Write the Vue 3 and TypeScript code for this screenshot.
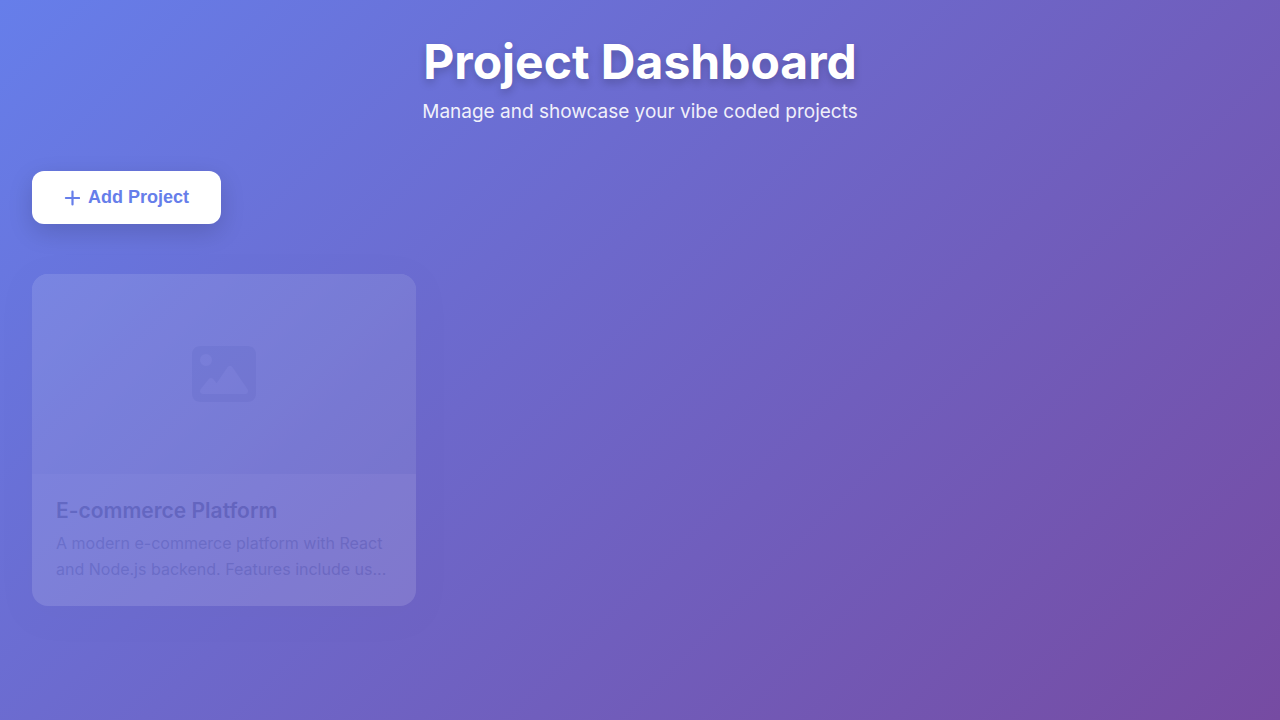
<script setup lang="ts">
interface Project {
  id: number
  title: string
  description: string
}

const projects: Project[] = [
  {
    id: 1,
    title: 'E-commerce Platform',
    description: 'A modern e-commerce platform with React and Node.js backend. Features include us...',
  },
]
</script>

<template>
  <div class="page">
    <header class="header">
      <h1>Project Dashboard</h1>
      <p>Manage and showcase your vibe coded projects</p>
    </header>
    <div class="controls">
      <button class="add" type="button">
        <svg class="plus" viewBox="0 0 16 16" aria-hidden="true">
          <path d="M8.5 1.5v13M1.9 8h13.2" />
        </svg>
        Add Project
      </button>
    </div>
    <main class="grid">
      <article v-for="project in projects" :key="project.id" class="card">
        <div class="thumb">
          <svg viewBox="0 0 512 512" aria-hidden="true">
            <path d="M0 96C0 60.7 28.7 32 64 32H448c35.3 0 64 28.7 64 64V416c0 35.3-28.7 64-64 64H64c-35.3 0-64-28.7-64-64V96zM323.8 202.5c-4.5-6.6-11.9-10.5-19.8-10.5s-15.4 3.9-19.8 10.5l-87 127.6L170.7 297c-4.6-5.7-11.5-9-18.7-9s-14.2 3.3-18.7 9l-64 80c-5.8 7.2-6.9 17.1-2.9 25.4s12.4 13.6 21.6 13.6h96 32H424c8.9 0 17.1-4.9 21.2-12.8s3.6-17.4-1.4-24.7l-120-176zM112 192a48 48 0 1 0 0-96 48 48 0 1 0 0 96z" />
          </svg>
        </div>
        <div class="body">
          <h2>{{ project.title }}</h2>
          <p>{{ project.description }}</p>
        </div>
      </article>
    </main>
  </div>
</template>

<style>
body {
  margin: 0;
}
</style>

<style scoped>
.page {
  box-sizing: border-box;
  min-height: 100vh;
  padding: 32px;
  font-family: Inter, "Liberation Sans", sans-serif;
  background: linear-gradient(135deg, #667eea 0%, #764ba2 100%);
}

.header {
  margin-bottom: 46px;
  color: #fff;
  text-align: center;
}

.header h1 {
  margin: 0 0 6px;
  font-size: 48px;
  font-weight: 700;
  line-height: 60px;
  text-shadow: 0 4px 8px rgba(0, 0, 0, 0.2);
}

.header p {
  margin: 0;
  font-size: 19px;
  font-weight: 400;
  line-height: 27px;
  opacity: 0.9;
}

.controls {
  display: flex;
  margin-bottom: 50px;
}

.add {
  display: flex;
  align-items: center;
  gap: 8px;
  padding: 16px 32px;
  border: 0;
  border-radius: 12px;
  color: #667eea;
  background: #fff;
  box-shadow: 0 8px 24px rgba(0, 0, 0, 0.15);
  font-family: "Liberation Sans", Arial, sans-serif;
  font-size: 18px;
  font-weight: 600;
  line-height: 21px;
  cursor: pointer;
}

.plus {
  width: 16px;
  height: 16px;
  fill: none;
  stroke: currentColor;
  stroke-width: 2.2;
  stroke-linecap: round;
}

.grid {
  display: grid;
  grid-template-columns: repeat(auto-fill, minmax(350px, 1fr));
  gap: 32px;
}

.card {
  overflow: hidden;
  border-radius: 16px;
  background: #fff;
  box-shadow: 0 8px 32px rgba(0, 0, 0, 0.1);
  opacity: 0.12;
}

.thumb {
  display: flex;
  align-items: center;
  justify-content: center;
  height: 200px;
  background: linear-gradient(135deg, #f0f2f8 0%, #c8d1e4 100%);
}

.thumb svg {
  width: 64px;
  height: 64px;
  fill: #a8b4c6;
}

.body {
  padding: 24px;
}

.body h2 {
  margin: 0 0 7px;
  color: #2d3748;
  font-size: 21px;
  font-weight: 600;
  line-height: 25px;
}

.body p {
  margin: 0;
  color: #66758a;
  font-size: 16px;
  line-height: 26px;
}
</style>
